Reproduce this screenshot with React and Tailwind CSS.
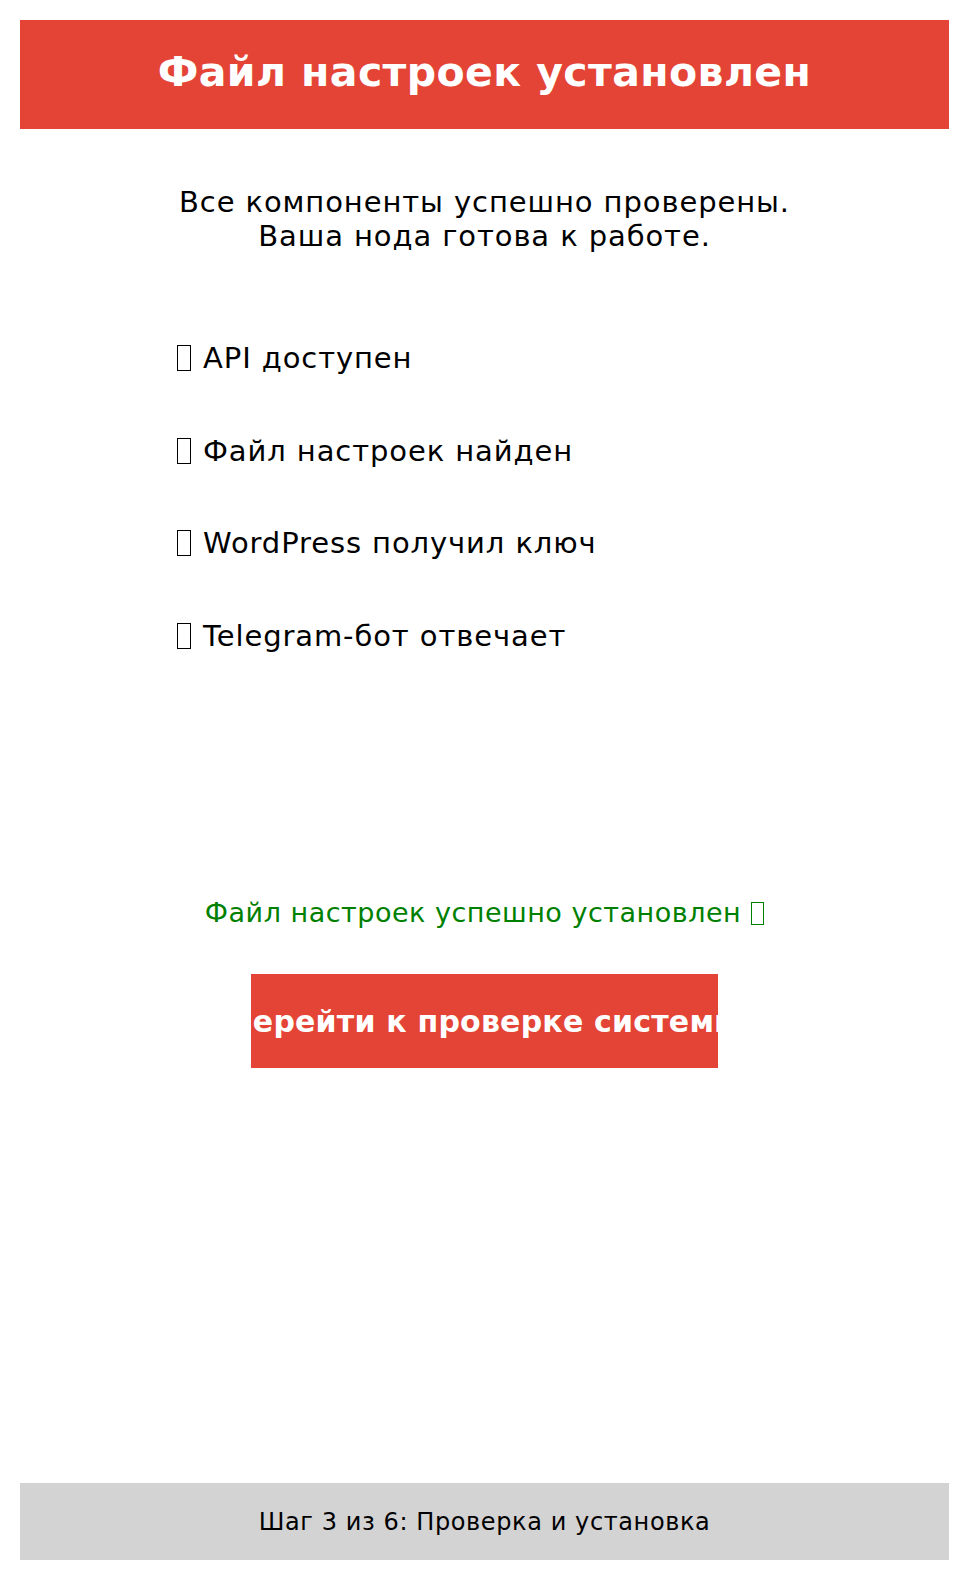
export default function App() {
  const checks = [
    'API доступен',
    'Файл настроек найден',
    'WordPress получил ключ',
    'Telegram-бот отвечает',
  ];

  return (
    <div
      className="min-h-[1580px] flex flex-col p-5 bg-white text-black"
      style={{ fontFamily: '"DejaVu Sans", sans-serif' }}
    >
      <header className="h-[109px] bg-[#e44436] flex items-center justify-center pb-[5px]">
        <h1 className="text-[41px] font-bold text-white leading-none tracking-[0.4px]">
          Файл настроек установлен
        </h1>
      </header>

      <p className="mt-[56px] text-center text-[29px] leading-[34px] tracking-[0.9px]">
        Все компоненты успешно проверены.
        <br />
        Ваша нода готова к работе.
      </p>

      <ul className="mt-[88px] ml-[157px] flex flex-col gap-[58.7px]">
        {checks.map((c) => (
          <li key={c} className="flex items-center text-[29px] leading-[34px] tracking-[0.9px]">
            <span className="inline-block w-[14px] h-[26px] border-[1.5px] border-black mr-[12px]" />
            {c}
          </li>
        ))}
      </ul>

      <p className="mt-[245px] h-[30px] text-center text-[27px] leading-[30px] tracking-[0.5px] text-[#008000] flex items-center justify-center">
        Файл настроек успешно установлен
        <span className="inline-block w-[13px] h-[23px] border-[1.5px] border-[#008000] ml-[10px]" />
      </p>

      <div className="mt-[46px] flex justify-center">
        <button className="w-[467px] h-[94px] bg-[#e44436] text-white font-bold text-[30px] tracking-[0.2px] overflow-hidden whitespace-nowrap flex items-center justify-center">
          Перейти к проверке системы
        </button>
      </div>

      <footer className="mt-auto h-[77px] bg-[#d3d3d3] flex items-center justify-center text-[24px] tracking-[0.6px]">
        Шаг 3 из 6: Проверка и установка
      </footer>
    </div>
  );
}
